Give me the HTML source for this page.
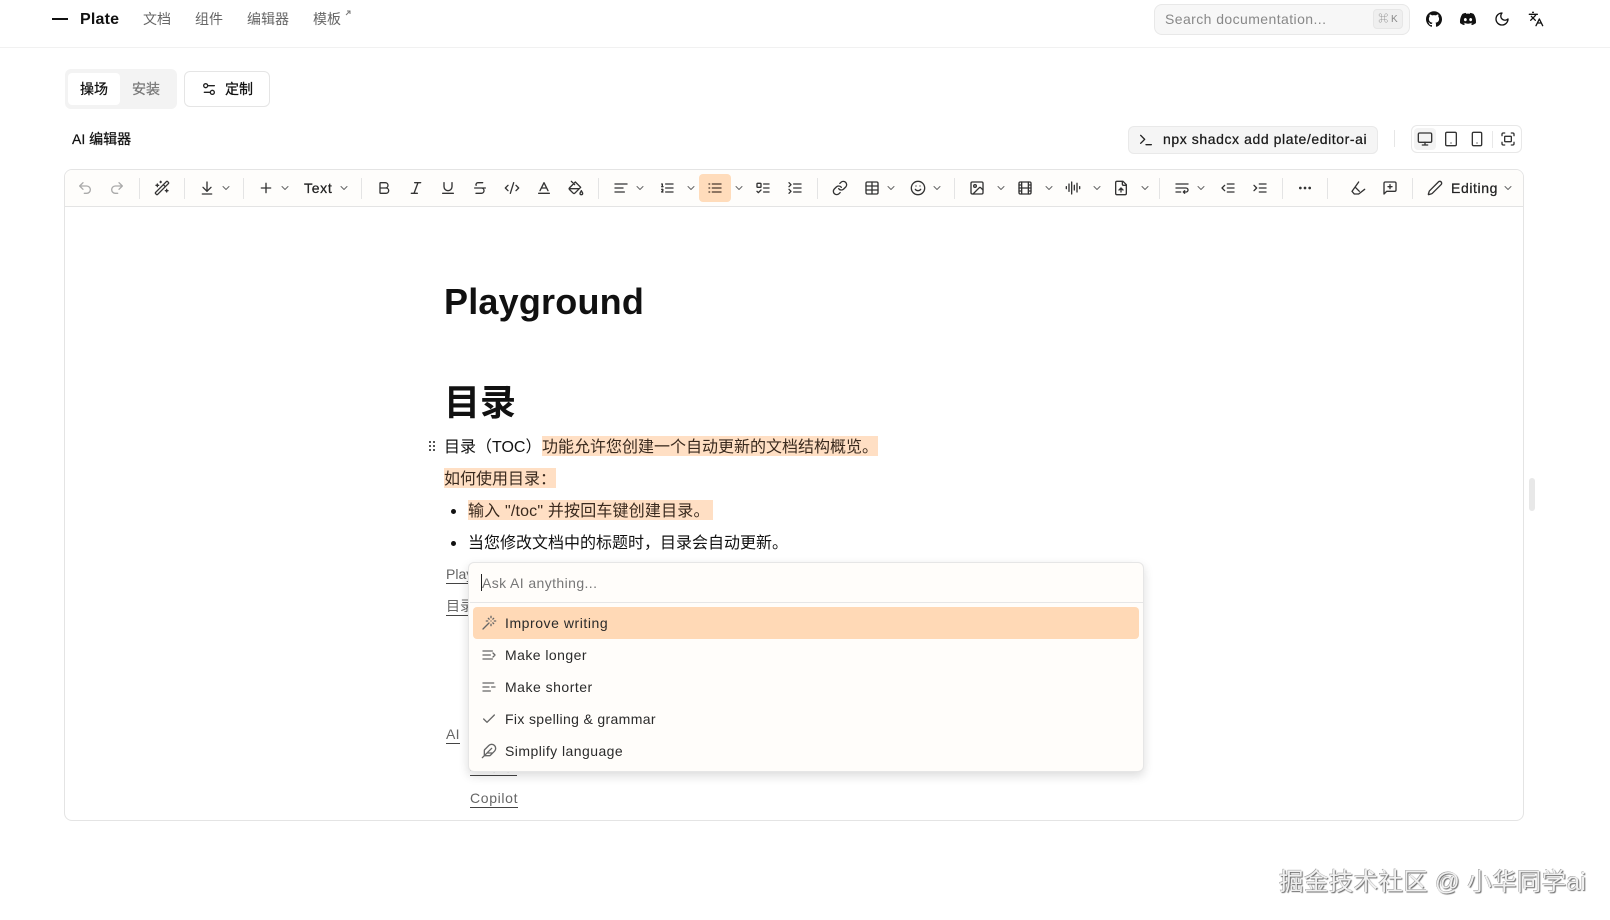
<!DOCTYPE html>
<html lang="zh"><head><meta charset="utf-8"><title>Plate</title>
<style>
html,body{margin:0;padding:0;background:#fff}
body{width:1610px;height:920px;position:relative;overflow:hidden;font-family:"Liberation Sans","Noto Sans CJK SC",sans-serif;color:#111}
.t{position:absolute;white-space:nowrap;line-height:20px;font-size:14px}
.b{position:absolute;box-sizing:border-box}
.n{color:#666}
.s{-webkit-text-stroke:.25px currentColor}
.l{position:absolute;white-space:nowrap;font-size:14px;line-height:24px;color:#666;border-bottom:1px solid #444;height:21px}
.sep{position:absolute;width:1px;top:178px;height:21px;background:#e4e4e4}
.hl{background:#ffdfc4}
.item{position:absolute;left:505px;font-size:14px;line-height:20px;color:#2a2a2a;white-space:nowrap;letter-spacing:.45px}
svg.i{position:absolute;left:0;top:0;z-index:5}
svg.i g{fill:none;stroke:#333;stroke-width:2;stroke-linecap:round;stroke-linejoin:round}
svg.i g.c{stroke:#666;stroke-width:2}
svg.i g.f{fill:#111;stroke:none}
svg.i g.m{stroke:#666}
</style></head><body>

<!-- nav -->
<div class="b" style="left:0;top:47px;width:1610px;height:1px;background:#f1f1f1"></div>
<div class="b" style="left:52px;top:18px;width:16px;height:2px;background:#111"></div>
<div class="t" style="left:80px;top:10px;font-size:16px;font-weight:700;letter-spacing:.2px">Plate</div>
<div class="t n" style="left:143px;top:9px">文档</div>
<div class="t n" style="left:195px;top:9px">组件</div>
<div class="t n" style="left:247px;top:9px">编辑器</div>
<div class="t n" style="left:313px;top:9px">模板</div>

<div class="b" style="left:1154px;top:4px;width:256px;height:31px;background:#f7f7f7;border:1px solid #e8e8e8;border-radius:8px"></div>
<div class="t" style="left:1165px;top:9px;color:#888;letter-spacing:.42px">Search documentation...</div>
<div class="b" style="left:1373px;top:9px;width:30px;height:20px;background:#efefef;border:1px solid #e6e6e6;border-radius:4px;font-size:10px;line-height:20px;text-align:center;color:#888">⌘ K</div>

<!-- tabs -->
<div class="b" style="left:65px;top:69px;width:112px;height:40px;background:#f3f3f3;border-radius:6px"></div>
<div class="b" style="left:68px;top:73px;width:52px;height:32px;background:#fff;border-radius:4px"></div>
<div class="t s" style="left:80px;top:79px">操场</div>
<div class="t s" style="left:132px;top:79px;color:#777">安装</div>
<div class="b" style="left:184px;top:71px;width:86px;height:36px;background:#fff;border:1px solid #e5e5e5;border-radius:6px"></div>
<div class="t s" style="left:225px;top:79px">定制</div>
<div class="t s" style="left:72px;top:129px">AI 编辑器</div>

<!-- npx -->
<div class="b" style="left:1128px;top:126px;width:250px;height:28px;background:#f5f5f5;border:1px solid #e9e9e9;border-radius:6px"></div>
<div class="t s" style="left:1163px;top:129px;letter-spacing:.58px;color:#1a1a1a">npx shadcx add plate/editor-ai</div>
<div class="b" style="left:1394px;top:130px;width:1px;height:17px;background:#e6e6e6"></div>
<div class="b" style="left:1411px;top:125px;width:111px;height:28px;background:#fff;border:1px solid #e8e8e8;border-radius:6px"></div>
<div class="b" style="left:1414px;top:128px;width:22px;height:22px;background:#f3f3f3;border-radius:4px"></div>
<div class="b" style="left:1492px;top:131px;width:1px;height:17px;background:#e8e8e8"></div>

<!-- editor frame -->
<div class="b" style="left:64px;top:169px;width:1460px;height:652px;background:#fff;border:1px solid #e4e4e4;border-radius:8px"></div>
<div class="b" style="left:65px;top:170px;width:1458px;height:37px;background:#fefdfb;border-bottom:1px solid #e4e4e4;border-radius:7px 7px 0 0"></div>
<div class="sep" style="left:139px"></div><div class="sep" style="left:184px"></div><div class="sep" style="left:243px"></div><div class="sep" style="left:361px"></div><div class="sep" style="left:598px"></div><div class="sep" style="left:817px"></div><div class="sep" style="left:954px"></div><div class="sep" style="left:1159px"></div><div class="sep" style="left:1282px"></div><div class="sep" style="left:1327px"></div><div class="sep" style="left:1412px"></div>
<div class="b" style="left:699px;top:174px;width:32px;height:28px;background:#ffdcbb;border-radius:4px"></div>
<div class="t s" style="left:304px;top:178px;color:#222;letter-spacing:.7px">Text</div>
<div class="t s" style="left:1451px;top:178px;color:#222;letter-spacing:.6px">Editing</div>

<!-- content -->
<div class="t" style="left:444px;top:278px;font-size:36px;line-height:48px;font-weight:700;letter-spacing:.2px">Playground</div>
<div class="t" style="left:444px;top:379px;font-size:36px;line-height:48px;font-weight:700">目录</div>
<div class="t" style="left:444px;top:438px;font-size:16px"><span>目录（TOC）</span></div>
<div class="b hl" style="left:542px;top:436px;width:336px;height:20px"></div>
<div class="t" style="left:542px;top:438px;font-size:16px;color:#3a2a1e">功能允许您创建一个自动更新的文档结构概览。</div>
<div class="b hl" style="left:444px;top:468px;width:112px;height:20px"></div>
<div class="t" style="left:444px;top:470px;font-size:16px;color:#3a2a1e">如何使用目录：</div>
<div class="b" style="left:451px;top:509px;width:5px;height:5px;border-radius:50%;background:#111"></div>
<div class="b hl" style="left:468px;top:500px;width:245px;height:20px"></div>
<div class="t" style="left:468px;top:502px;font-size:16px;color:#3a2a1e;letter-spacing:.18px">输入 "/toc" 并按回车键创建目录。</div>
<div class="b" style="left:451px;top:541px;width:5px;height:5px;border-radius:50%;background:#111"></div>
<div class="t" style="left:468px;top:534px;font-size:16px">当您修改文档中的标题时，目录会自动更新。</div>

<div class="l" style="left:446px;top:562px">Playground</div>
<div class="l" style="left:446px;top:594px">目录</div>
<div class="l" style="left:446px;top:722px;letter-spacing:.3px">AI</div>
<div class="l" style="left:470px;top:754px;width:47px;overflow:hidden">AI 菜单</div>
<div class="l" style="left:470px;top:786px;letter-spacing:.65px">Copilot</div>

<!-- popover -->
<div class="b" style="left:468px;top:562px;width:676px;height:210px;background:#fffdfa;border:1px solid #e6e6e6;border-radius:6px;box-shadow:0 4px 10px rgba(0,0,0,.14);z-index:2"></div>
<div class="b" style="left:470px;top:602px;width:673px;height:1px;background:#e6e6e6;z-index:3"></div>
<div class="b" style="left:473px;top:607px;width:666px;height:32px;background:#ffd9b6;border-radius:4px;z-index:3"></div>
<div class="b" style="left:481px;top:574px;width:1px;height:17px;background:#222;z-index:3"></div>
<div class="t" style="left:482px;top:573px;color:#777;z-index:3;letter-spacing:.4px">Ask AI anything...</div>
<div class="item" style="top:613px;z-index:3;letter-spacing:.55px">Improve writing</div>
<div class="item" style="top:645px;z-index:3">Make longer</div>
<div class="item" style="top:677px;z-index:3;letter-spacing:.5px">Make shorter</div>
<div class="item" style="top:709px;z-index:3;letter-spacing:.35px">Fix spelling &amp; grammar</div>
<div class="item" style="top:741px;z-index:3">Simplify language</div>

<!-- scrollbar -->
<div class="b" style="left:1529px;top:478px;width:6px;height:33px;background:#e8e8e8;border-radius:3px"></div>

<!-- watermark -->
<div class="t" style="left:1279px;top:867px;font-size:24.6px;line-height:32px;color:#f0f0f0;letter-spacing:.22px;text-shadow:1px 1px 1px #6a6a6a,-.5px -.5px 0 #999;z-index:6">掘金技术社区 @ 小华同学ai</div>

<!-- icons -->
<svg class="i" width="1610" height="920" viewBox="0 0 1610 920" xmlns="http://www.w3.org/2000/svg">
<!-- nav -->
<path d="M346 15l4-4M347 11h3v3" fill="none" stroke="#777" stroke-width="1"/>
<g class="f" transform="translate(1426,11) scale(.667)"><path d="M12 .297c-6.63 0-12 5.373-12 12 0 5.303 3.438 9.8 8.205 11.385.6.113.82-.258.82-.577 0-.285-.01-1.04-.015-2.04-3.338.724-4.042-1.61-4.042-1.61C4.422 18.07 3.633 17.7 3.633 17.7c-1.087-.744.084-.729.084-.729 1.205.084 1.838 1.236 1.838 1.236 1.07 1.835 2.809 1.305 3.495.998.108-.776.417-1.305.76-1.605-2.665-.3-5.466-1.332-5.466-5.93 0-1.31.465-2.38 1.235-3.22-.135-.303-.54-1.523.105-3.176 0 0 1.005-.322 3.3 1.23.96-.267 1.98-.399 3-.405 1.02.006 2.04.138 3 .405 2.28-1.552 3.285-1.23 3.285-1.23.645 1.653.24 2.873.12 3.176.765.84 1.23 1.91 1.23 3.22 0 4.61-2.805 5.625-5.475 5.92.42.36.81 1.096.81 2.22 0 1.606-.015 2.896-.015 3.286 0 .315.21.69.825.57C20.565 22.092 24 17.592 24 12.297c0-6.627-5.373-12-12-12"/></g>
<g class="f" transform="translate(1460,11) scale(.667)"><path d="M20.317 4.37a19.791 19.791 0 0 0-4.885-1.515.074.074 0 0 0-.079.037c-.21.375-.444.864-.608 1.25a18.27 18.27 0 0 0-5.487 0 12.64 12.64 0 0 0-.617-1.25.077.077 0 0 0-.079-.037A19.736 19.736 0 0 0 3.677 4.37a.07.07 0 0 0-.032.027C.533 9.046-.32 13.58.099 18.057a.082.082 0 0 0 .031.057 19.9 19.9 0 0 0 5.993 3.03.078.078 0 0 0 .084-.028 14.09 14.09 0 0 0 1.226-1.994.076.076 0 0 0-.041-.106 13.107 13.107 0 0 1-1.872-.892.077.077 0 0 1-.008-.128 10.2 10.2 0 0 0 .372-.292.074.074 0 0 1 .077-.01c3.928 1.793 8.18 1.793 12.062 0a.074.074 0 0 1 .078.01c.12.098.246.198.373.292a.077.077 0 0 1-.006.127 12.299 12.299 0 0 1-1.873.892.077.077 0 0 0-.041.107c.36.698.772 1.362 1.225 1.993a.076.076 0 0 0 .084.028 19.839 19.839 0 0 0 6.002-3.03.077.077 0 0 0 .032-.054c.5-5.177-.838-9.674-3.549-13.66a.061.061 0 0 0-.031-.03zM8.02 15.33c-1.183 0-2.157-1.085-2.157-2.419 0-1.333.956-2.419 2.157-2.419 1.21 0 2.176 1.096 2.157 2.42 0 1.333-.956 2.418-2.157 2.418zm7.975 0c-1.183 0-2.157-1.085-2.157-2.419 0-1.333.955-2.419 2.157-2.419 1.21 0 2.176 1.096 2.157 2.42 0 1.333-.946 2.418-2.157 2.418z"/></g>
<g transform="translate(1494,11) scale(.667)" style="stroke:#111"><path d="M12 3a6 6 0 0 0 9 9 9 9 0 1 1-9-9Z"/></g>
<g transform="translate(1528,11) scale(.667)" style="stroke:#111"><path d="m5 8 6 6M4 14l6-6 2-3M2 5h12M7 2h1M22 22l-5-10-5 10M14 18h6"/></g>

<!-- settings -->
<g transform="translate(201,81) scale(.667)" style="stroke:#222"><path d="M20 7h-9M14 17H5"/><circle cx="17" cy="17" r="3"/><circle cx="7" cy="7" r="3"/></g>
<!-- terminal -->
<g transform="translate(1138,132) scale(.667)" style="stroke:#222"><path d="m4 17 6-6-6-6M12 19h8"/></g>
<!-- device -->
<g transform="translate(1417,131) scale(.667)"><rect x="2" y="3" width="20" height="14" rx="2"/><path d="M8 21h8M12 17v4"/></g>
<g transform="translate(1443,131) scale(.667)"><rect x="4" y="2" width="16" height="20" rx="2"/><path d="M12 18h.01"/></g>
<g transform="translate(1469,131) scale(.667)"><rect x="5" y="2" width="14" height="20" rx="2"/><path d="M12 18h.01"/></g>
<g transform="translate(1500,131) scale(.667)"><path d="M3 7V5a2 2 0 0 1 2-2h2M17 3h2a2 2 0 0 1 2 2v2M21 17v2a2 2 0 0 1-2 2h-2M7 21H5a2 2 0 0 1-2-2v-2"/><rect x="7" y="8" width="10" height="8" rx="1"/></g>

<!-- toolbar -->
<g transform="translate(77,180) scale(.667)" style="stroke:#aaa"><path d="M9 14 4 9l5-5M4 9h10.5a5.5 5.5 0 0 1 5.5 5.5a5.5 5.5 0 0 1-5.5 5.5H11"/></g>
<g transform="translate(109,180) scale(.667)" style="stroke:#aaa"><path d="m15 14 5-5-5-5M20 9H9.5A5.5 5.5 0 0 0 4 14.5A5.5 5.5 0 0 0 9.5 20H13"/></g>
<g transform="translate(154,180) scale(.667)"><path d="m21.64 3.64-1.28-1.28a1.21 1.21 0 0 0-1.72 0L2.36 18.64a1.21 1.21 0 0 0 0 1.72l1.28 1.28a1.2 1.2 0 0 0 1.72 0L21.64 5.36a1.2 1.2 0 0 0 0-1.72M14 7l3 3M5 6v4M19 14v4M10 2v2M7 8H3M21 16h-4M11 3H9"/></g>
<g transform="translate(199,180) scale(.667)"><path d="M12 17V3M6 11l6 6 6-6M19 21H5"/></g>
<g transform="translate(258,180) scale(.667)"><path d="M5 12h14M12 5v14"/></g>
<g transform="translate(376,180) scale(.667)"><path d="M6 12h9a4 4 0 0 1 0 8H7a1 1 0 0 1-1-1V5a1 1 0 0 1 1-1h7a4 4 0 0 1 0 8"/></g>
<g transform="translate(408,180) scale(.667)"><path d="M19 4H10M14 20H5M15 4 9 20"/></g>
<g transform="translate(440,180) scale(.667)"><path d="M6 4v6a6 6 0 0 0 12 0V4M4 20h16"/></g>
<g transform="translate(472,180) scale(.667)"><path d="M16 4H9a3 3 0 0 0-2.83 4M14 12a4 4 0 0 1 0 8H6M4 12h16"/></g>
<g transform="translate(504,180) scale(.667)"><path d="m18 16 4-4-4-4M6 8l-4 4 4 4M14.5 4l-5 16"/></g>
<g transform="translate(536,180) scale(.667)"><path d="M4 20h16M6 16l6-12 6 12M8 12h8"/></g>
<g transform="translate(568,180) scale(.667)"><path d="m19 11-8-8-8.6 8.6a2 2 0 0 0 0 2.8l5.2 5.2c.8.8 2 .8 2.8 0L19 11ZM5 2l5 5M2 13h15M22 20a2 2 0 1 1-4 0c0-1.6 1.7-2.4 2-4 .3 1.6 2 2.4 2 4Z"/></g>
<g transform="translate(613,180) scale(.667)"><path d="M15 12H3M17 18H3M21 6H3"/></g>
<g transform="translate(659,180) scale(.667)"><path d="M10 12h11M10 18h11M10 6h11M4 10h2M4 6h1v4M6 18H4c0-1 2-2 2-3s-1-1.5-2-1"/></g>
<g transform="translate(707,180) scale(.667)" style="stroke:#4a3a2e"><path d="M3 12h1M3 18h1M3 6h1M8 12h13M8 18h13M8 6h13"/></g>
<g transform="translate(755,180) scale(.667)"><rect x="3" y="5" width="6" height="6" rx="1"/><path d="m3 17 2 2 4-4M13 6h8M13 12h8M13 18h8"/></g>
<g transform="translate(787,180) scale(.667)"><path d="M10 12h11M10 18h11M10 6h11M3 10l3-3-3-3M3 20l3-3-3-3"/></g>
<g transform="translate(832,180) scale(.667)"><path d="M10 13a5 5 0 0 0 7.54.54l3-3a5 5 0 0 0-7.07-7.07l-1.72 1.71M14 11a5 5 0 0 0-7.54-.54l-3 3a5 5 0 0 0 7.07 7.07l1.71-1.71"/></g>
<g transform="translate(864,180) scale(.667)"><path d="M12 3v18M3 9h18M3 15h18"/><rect x="3" y="3" width="18" height="18" rx="2"/></g>
<g transform="translate(910,180) scale(.667)"><circle cx="12" cy="12" r="10"/><path d="M8 14s1.5 2 4 2 4-2 4-2M9 9h.01M15 9h.01"/></g>
<g transform="translate(969,180) scale(.667)"><rect x="3" y="3" width="18" height="18" rx="2"/><circle cx="9" cy="9" r="2"/><path d="m21 15-3.086-3.086a2 2 0 0 0-2.828 0L6 21"/></g>
<g transform="translate(1017,180) scale(.667)"><rect x="3" y="3" width="18" height="18" rx="2"/><path d="M7 3v18M3 7.5h4M3 12h18M3 16.5h4M17 3v18M17 7.5h4M17 16.5h4"/></g>
<g transform="translate(1065,180) scale(.667)"><path d="M2 10v3M6 6v11M10 3v18M14 8v7M18 5v13M22 10v3"/></g>
<g transform="translate(1113,180) scale(.667)"><path d="M15 2H6a2 2 0 0 0-2 2v16a2 2 0 0 0 2 2h12a2 2 0 0 0 2-2V7ZM14 2v4a2 2 0 0 0 2 2h4M12 12v6M15 15l-3-3-3 3"/></g>
<g transform="translate(1174,180) scale(.667)"><path d="M3 6h18M3 12h15a3 3 0 1 1 0 6h-4M16 16l-2 2 2 2M3 18h7"/></g>
<g transform="translate(1220,180) scale(.667)"><path d="M21 12H11M21 18H11M21 6H11M7 8l-4 4 4 4"/></g>
<g transform="translate(1252,180) scale(.667)"><path d="M21 12H11M21 18H11M21 6H11M3 8l4 4-4 4"/></g>
<g transform="translate(1297,180) scale(.667)"><path d="M5 12h.01M12 12h.01M19 12h.01" style="stroke-width:4"/></g>
<g transform="translate(1350,180) scale(.667)"><path d="M13 3 3 17l3.5 4H13M8 11l6 6M13 21l9-7"/></g>
<g transform="translate(1382,180) scale(.667)"><path d="M21 15a2 2 0 0 1-2 2H7l-4 4V5a2 2 0 0 1 2-2h14a2 2 0 0 1 2 2zM12 7v6M9 10h6"/></g>
<g transform="translate(1427,180) scale(.667)"><path d="M21.174 6.812a1 1 0 0 0-3.986-3.987L3.842 16.174a2 2 0 0 0-.5.83l-1.321 4.352a.5.5 0 0 0 .623.622l4.353-1.32a2 2 0 0 0 .83-.497z"/></g>

<!-- chevrons -->
<g class="c" transform="translate(220,182) scale(.5)"><path d="m6 9 6 6 6-6"/></g>
<g class="c" transform="translate(279,182) scale(.5)"><path d="m6 9 6 6 6-6"/></g>
<g class="c" transform="translate(338,182) scale(.5)"><path d="m6 9 6 6 6-6"/></g>
<g class="c" transform="translate(634,182) scale(.5)"><path d="m6 9 6 6 6-6"/></g>
<g class="c" transform="translate(685,182) scale(.5)"><path d="m6 9 6 6 6-6"/></g>
<g class="c" transform="translate(733,182) scale(.5)"><path d="m6 9 6 6 6-6"/></g>
<g class="c" transform="translate(885,182) scale(.5)"><path d="m6 9 6 6 6-6"/></g>
<g class="c" transform="translate(931,182) scale(.5)"><path d="m6 9 6 6 6-6"/></g>
<g class="c" transform="translate(995,182) scale(.5)"><path d="m6 9 6 6 6-6"/></g>
<g class="c" transform="translate(1043,182) scale(.5)"><path d="m6 9 6 6 6-6"/></g>
<g class="c" transform="translate(1091,182) scale(.5)"><path d="m6 9 6 6 6-6"/></g>
<g class="c" transform="translate(1139,182) scale(.5)"><path d="m6 9 6 6 6-6"/></g>
<g class="c" transform="translate(1195,182) scale(.5)"><path d="m6 9 6 6 6-6"/></g>
<g class="c" transform="translate(1502,182) scale(.5)"><path d="m6 9 6 6 6-6"/></g>

<!-- drag handle -->
<g class="f" style="fill:#555"><rect x="429" y="441" width="2" height="2"/><rect x="433" y="441" width="2" height="2"/><rect x="429" y="445" width="2" height="2"/><rect x="433" y="445" width="2" height="2"/><rect x="429" y="449" width="2" height="2"/><rect x="433" y="449" width="2" height="2"/></g>

<!-- menu icons -->
<g class="m" transform="translate(481,615) scale(.667)"><path d="M15 4V2M15 16v-2M8 9h2M20 9h2M17.8 11.8 19 13M15 9h.01M17.8 6.2 19 5M3 21l9-9M12.2 6.2 11 5"/></g>
<g class="m" transform="translate(481,647) scale(.667)"><path d="M3 6h14M3 12h11M3 18h14M18 9l3 3-3 3"/></g>
<g class="m" transform="translate(481,679) scale(.667)"><path d="M3 6h16M3 12h9M16 12h5M3 18h11"/></g>
<g class="m" transform="translate(481,711) scale(.667)"><path d="M20 6 9 17l-5-5"/></g>
<g class="m" transform="translate(481,743) scale(.667)"><path d="M12.67 19a2 2 0 0 0 1.416-.588l6.154-6.172a6 6 0 0 0-8.49-8.49L5.586 9.914A2 2 0 0 0 5 11.328V18a1 1 0 0 0 1 1zM16 8 2 22M17.5 15H9"/></g>
</svg>
</body></html>
